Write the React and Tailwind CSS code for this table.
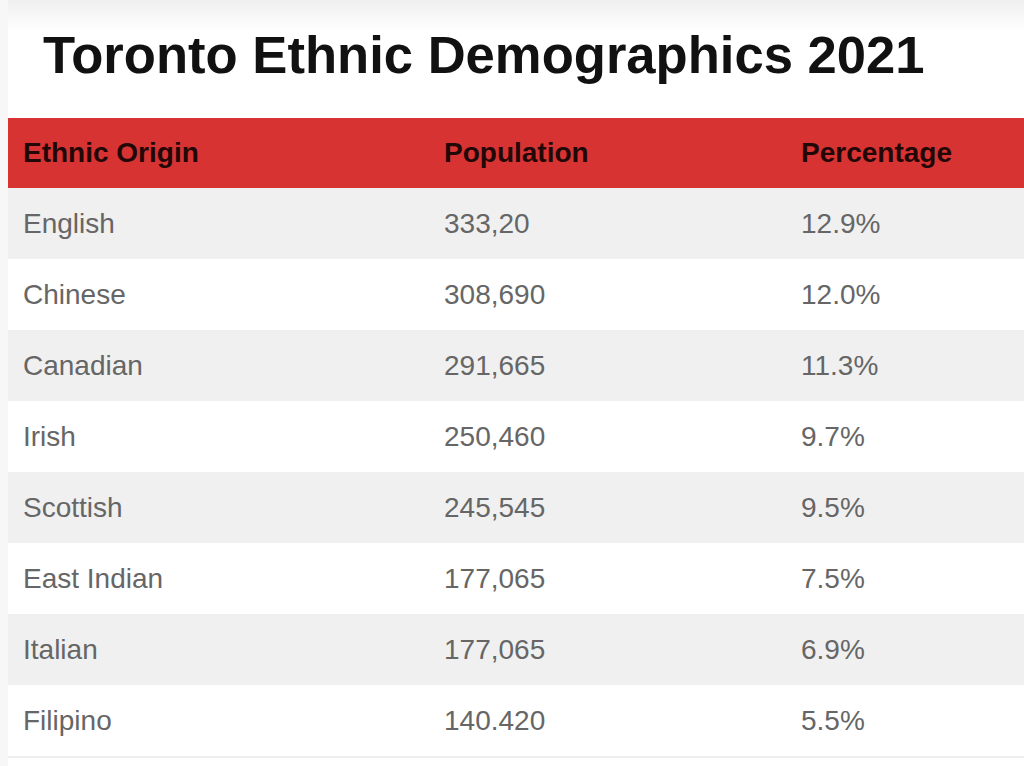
const rows = [
  ["English", "333,20", "12.9%"],
  ["Chinese", "308,690", "12.0%"],
  ["Canadian", "291,665", "11.3%"],
  ["Irish", "250,460", "9.7%"],
  ["Scottish", "245,545", "9.5%"],
  ["East Indian", "177,065", "7.5%"],
  ["Italian", "177,065", "6.9%"],
  ["Filipino", "140.420", "5.5%"],
];

export default function App() {
  return (
    <div
      className="w-[1024px] h-[766px] overflow-hidden bg-white flex"
      style={{ fontFamily: '"Liberation Sans", Arial, sans-serif' }}
    >
      <div className="w-2 bg-[#f7f7f7]"></div>
      <div className="flex-1 flex flex-col bg-gradient-to-b from-[#efefef] via-white via-[4%] to-white">
        <h1 className="h-[118px] pl-[35px] pt-[23px] text-[52.6px] font-bold text-[#111] leading-[64px]">
          Toronto Ethnic Demographics 2021
        </h1>

        <div className="h-[70px] bg-[#d83333] flex items-center text-[28px] font-bold text-[#220707]">
          <div className="w-[436px] pl-[15px]">Ethnic Origin</div>
          <div className="w-[357px]">Population</div>
          <div>Percentage</div>
        </div>

        {rows.map((r, i) => (
          <div
            key={i}
            className={
              "h-[71px] flex items-center text-[28px] text-[#666] " +
              (i % 2 === 0 ? "bg-[#f0f0f0]" : "bg-white")
            }
          >
            <div className="w-[436px] pl-[15px]">{r[0]}</div>
            <div className="w-[357px]">{r[1]}</div>
            <div>{r[2]}</div>
          </div>
        ))}
        <div className="h-[2px] bg-[#eeeeee]"></div>
      </div>
    </div>
  );
}
